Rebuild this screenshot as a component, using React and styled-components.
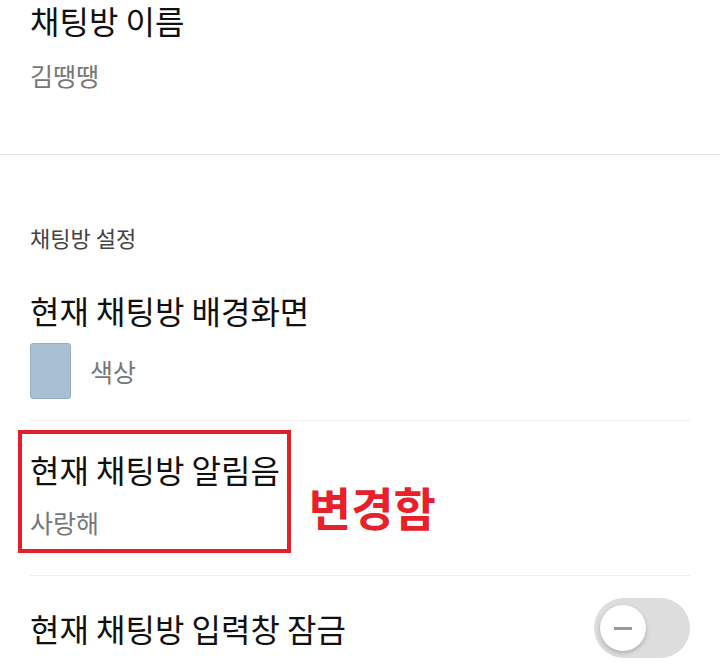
import styled, { createGlobalStyle } from "styled-components";

const GlobalStyle = createGlobalStyle`
  body {
    margin: 0;
    background: #fff;
    font-family: "Noto Sans CJK KR", "Noto Sans", sans-serif;
  }
`;

// settings rows for the chat room
const rows = [
  { id: "bg", title: "현재 채팅방 배경화면", swatch: "#a9bfd2", value: "색상" },
  { id: "sound", title: "현재 채팅방 알림음", value: "사랑해", note: "변경함" },
  { id: "lock", title: "현재 채팅방 입력창 잠금", toggle: true },
];

const Toggle = ({ on }) => (
  <Track $on={on}>
    <Knob>
      <Minus />
    </Knob>
  </Track>
);

const App = () => {
  return (
    <>
      <GlobalStyle />
      <Page>
        <NameBlock>
          <Title>채팅방 이름</Title>
          <NameSub>김땡땡</NameSub>
        </NameBlock>
        <Divider />
        <Settings>
          <SectionLabel>채팅방 설정</SectionLabel>
          <BgItem>
            <Title>{rows[0].title}</Title>
            <SwatchRow>
              <Swatch $color={rows[0].swatch} />
              <Sub>{rows[0].value}</Sub>
            </SwatchRow>
          </BgItem>
          <Divider $inset />
          <NoteRow>
            <Highlight>
              <Title>{rows[1].title}</Title>
              <HighlightSub>{rows[1].value}</HighlightSub>
            </Highlight>
            <Note>{rows[1].note}</Note>
          </NoteRow>
          <Divider $inset />
          <ToggleRow>
            <Title>{rows[2].title}</Title>
            <Toggle on={false} />
          </ToggleRow>
        </Settings>
      </Page>
    </>
  );
};

const Page = styled.div`
  width: 720px;
  height: 669px;
  overflow: hidden;
  background: #fff;
`;

const NameBlock = styled.div`
  display: flex;
  flex-direction: column;
  padding: 0 30px 63px;
`;

const Title = styled.div`
  font-size: 32px;
  line-height: 1.3;
  color: #111;
  white-space: nowrap;
`;

const Sub = styled.div`
  font-size: 25px;
  line-height: 1.3;
  color: #777;
`;

const NameSub = styled(Sub)`
  margin-top: 17px;
`;

const Divider = styled.hr`
  margin: 0 ${(p) => (p.$inset ? "30px" : "0")};
  border: 0;
  height: 1px;
  background: ${(p) => (p.$inset ? "#efefef" : "#e2e2e2")};
`;

const Settings = styled.div`
  display: flex;
  flex-direction: column;
`;

const SectionLabel = styled.div`
  padding: 68px 30px 0;
  font-size: 22px;
  line-height: 1.3;
  color: #444;
`;

const BgItem = styled.div`
  display: flex;
  flex-direction: column;
  padding: 38px 30px 21px;
`;

const SwatchRow = styled.div`
  display: flex;
  align-items: center;
  gap: 19px;
  margin-top: 12px;
`;

const Swatch = styled.div`
  width: 41px;
  height: 56px;
  box-sizing: border-box;
  border-radius: 3px;
  border: 1px solid #97adc0;
  background: ${(p) => p.$color};
`;

const NoteRow = styled.div`
  display: flex;
  align-items: flex-end;
  gap: 18px;
  padding: 9px 30px 22px 18px;
`;

const Highlight = styled.div`
  display: flex;
  flex-direction: column;
  border: 4px solid #e3202a;
  padding: 15px 7px 11px 8px;
`;

const HighlightSub = styled(Sub)`
  margin-top: 15px;
`;

const Note = styled.div`
  margin-bottom: 19px;
  font-size: 46px;
  font-weight: 700;
  line-height: 1.2;
  color: #e8202a;
`;

const ToggleRow = styled.div`
  display: flex;
  align-items: center;
  justify-content: space-between;
  padding: 22px 30px 0;
`;

const Track = styled.div`
  display: flex;
  align-items: center;
  justify-content: ${(p) => (p.$on ? "flex-end" : "flex-start")};
  box-sizing: border-box;
  width: 96px;
  height: 60px;
  padding: 0 6px;
  border-radius: 30px;
  background: #dddddd;
`;

const Knob = styled.div`
  display: flex;
  align-items: center;
  justify-content: center;
  width: 46px;
  height: 46px;
  border-radius: 50%;
  background: #fff;
  box-shadow: 0 2px 4px rgba(0, 0, 0, 0.22);
`;

const Minus = styled.span`
  width: 18px;
  height: 3px;
  background: #9a9a9a;
`;

export default App;
